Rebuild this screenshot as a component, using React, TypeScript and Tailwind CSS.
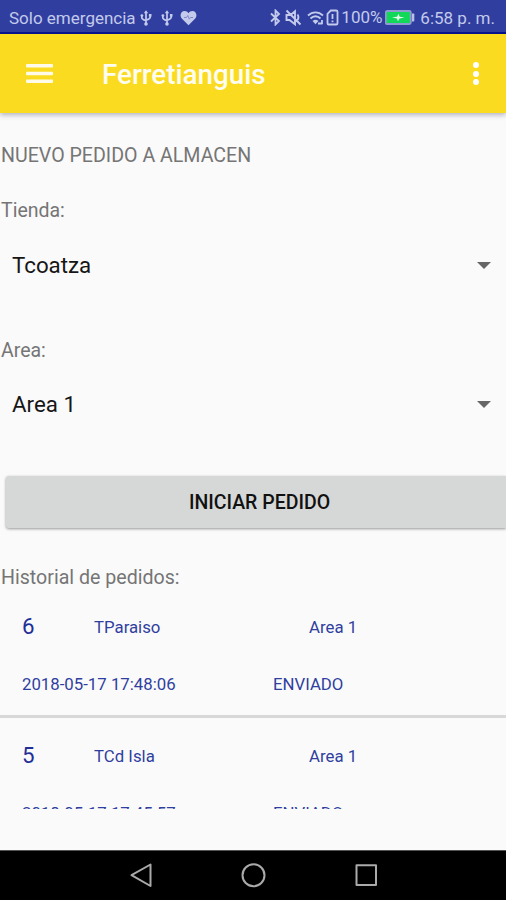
import { useState } from 'react';

const pedidos = [
  { id: 6, tienda: 'TParaiso', area: 'Area 1', fecha: '2018-05-17 17:48:06', estado: 'ENVIADO' },
  { id: 5, tienda: 'TCd Isla', area: 'Area 1', fecha: '2018-05-17 17:45:57', estado: 'ENVIADO' },
];

const UsbIcon = () => (
  <svg width="12" height="18" viewBox="0 0 12 18" fill="none" stroke="currentColor" strokeWidth="1.7">
    <path d="M6 3v12M1.8 6.5v2.2c0 1.5 1 2 4.2 3.1M10.2 6v2.2c0 1.5-1 2-4.2 3.1" />
    <path d="M6 1.2 3.8 4.2h4.4z" fill="currentColor" stroke="none" />
    <circle cx="1.9" cy="6.6" r="1.4" fill="currentColor" stroke="none" />
    <path d="M8.9 5h2.6v2.6H8.9z" fill="currentColor" stroke="none" />
    <circle cx="6" cy="15" r="1.8" fill="currentColor" stroke="none" />
  </svg>
);

const StatusBar = () => (
  <div className="flex h-[34px] shrink-0 items-center border-b-2 border-[#06128f] bg-[#303f9f] pt-[3px] text-[#c3caeb]">
    <span className="w-[131px] pt-0.5 pl-[9px] text-[17px] whitespace-nowrap">Solo emergencia</span>
    <div className="flex items-center pl-[9px]">
      <UsbIcon />
      <div className="w-[9px]" />
      <UsbIcon />
      <svg className="ml-[7px]" width="17" height="16" viewBox="0 0 17 16">
        <path fill="currentColor" d="M8.5 15.2 2 8.8C-.8 5.7.8 1 4.6 1c1.7 0 3 .8 3.9 2.2C9.4 1.8 10.7 1 12.4 1c3.8 0 5.4 4.700 2.600 7.800z" />
        <path d="M4 7.500h2.500l1.300-2 1.500 3.600 1.200-1.600H13" fill="none" stroke="#7f89c6" strokeWidth="1" />
      </svg>
    </div>
    <div className="ml-auto flex items-center pr-[11px]">
      <svg width="11" height="17" viewBox="0 0 11 17" fill="none" stroke="currentColor" strokeWidth="1.800">
        <path d="m1 4.500 8 7.500-3.500 3.500v-14L9 5l-8 7.500" />
      </svg>
      <svg className="ml-1" width="17" height="17" viewBox="0 0 17 17" fill="none" stroke="currentColor" strokeWidth="1.900">
        <path d="M1.500 6v5h3l5.500 4.300V2.200L5.500 6zM1.500 1.500l14 14M12.500 5.500c1 1.500 1 4 0 5.500" />
      </svg>
      <svg className="ml-[5px]" width="18" height="16" viewBox="0 0 18 16" fill="none" stroke="currentColor" strokeWidth="1.800">
        <path d="M1 5.500c4.500-4.300 10.500-4.300 15 0M3.500 8.500c3-3 7-3 10 0" />
        <path d="M5.500 11c2-1.700 4-1.700 6 0l-3 3.200z" fill="currentColor" stroke="none" />
        <path d="M11 13.500h4.500M15 10v4" strokeWidth="1.800" />
      </svg>
      <svg className="ml-px" width="13" height="17" viewBox="0 0 13 17" fill="none" stroke="currentColor" strokeWidth="1.800">
        <path d="M4.800 1.500h5.400c.8 0 1.300.5 1.300 1.300v11.400c0 .8-.5 1.300-1.300 1.300H2.800c-.8 0-1.300-.5-1.300-1.300V4.800z" />
        <path d="M6.500 5v5M6.500 11.500v1.700" />
      </svg>
      <span className="ml-[2px] w-[41px] text-[17px] whitespace-nowrap">100%</span>
      <svg className="mr-px ml-[3px]" width="30" height="16" viewBox="0 0 30 16">
        <rect x=".8" y="1" width="25" height="13" rx="1.500" fill="#12d85a" stroke="#8f9bd0" strokeWidth="1.800" />
        <path d="M27 3.500h1.500c.5 0 .8.300.8.800v6.400c0 .5-.3.800-.8.800H27z" fill="#b8c1e6" />
        <path d="m7 7.200 5-.5 1.500-3 1.200 3 4.800.8-5 1-1.500 2.700-1.200-2.700z" fill="#e5ffec" />
      </svg>
      <span className="ml-1 pt-0.5 text-[17px] whitespace-nowrap">6:58 p. m.</span>
    </div>
  </div>
);

const AppBar = () => (
  <header className="z-10 flex h-[79px] shrink-0 items-center bg-[#fadb20] pr-[18px] pl-[26px] text-white shadow-[0_2px_5px_rgba(40,40,90,0.35)]">
    <button aria-label="Menu" className="w-[27px]">
      <svg width="27" height="19" viewBox="0 0 27 19" fill="#fffbe8">
        <rect y="0" width="27" height="3.500" rx=".8" />
        <rect y="7.700" width="27" height="3.500" rx=".8" />
        <rect y="15.400" width="27" height="3.500" rx=".8" />
      </svg>
    </button>
    <h1 className="mt-0.5 ml-[49px] text-[27.800px] font-medium text-[#fffdf0]">Ferretianguis</h1>
    <button aria-label="Opciones" className="ml-auto flex w-6 flex-col items-center gap-[2.500px]">
      <span className="size-1.5 rounded-full bg-white" />
      <span className="size-1.5 rounded-full bg-white" />
      <span className="size-1.5 rounded-full bg-white" />
    </button>
  </header>
);

const Spinner = ({ label, value }: { label: string; value: string }) => (
  <div className="h-[139.500px]">
    <p className="pl-px text-[19.500px] leading-[23px] text-[#757575]">{label}</p>
    <button className="mt-5 flex h-[46px] w-full items-center justify-between pr-[15px] pl-3">
      <span className="pt-px text-[22.300px] text-[#161616]">{value}</span>
      <svg width="14" height="7" viewBox="0 0 14 7">
        <path d="M0 0h14L7 7z" fill="#666" />
      </svg>
    </button>
  </div>
);

const NavigationBar = () => (
  <nav className="h-[50px] shrink-0 border-t border-[#555] bg-black">
    <svg width="506" height="49" viewBox="0 0 506 49" fill="none" stroke="#aaa" strokeWidth="2" strokeLinejoin="round">
      <path d="M150.500 13.500v21.500L131.500 24.200z" />
      <circle cx="253.500" cy="24.200" r="11" />
      <rect x="356.500" y="14.300" width="19.500" height="19.800" />
    </svg>
  </nav>
);

export default function App() {
  const [tienda] = useState('Tcoatza');
  const [area] = useState('Area 1');

  return (
    <div className="flex h-[900px] w-[506px] flex-col overflow-hidden bg-[#fafafa] font-[Roboto,sans-serif]">
      <StatusBar />
      <AppBar />

      <main className="flex min-h-0 flex-1 flex-col pt-[31px]">
        <h2 className="mb-8 pl-px text-[19.600px] leading-[23px] text-[#757575]">NUEVO PEDIDO A ALMACEN</h2>
        <Spinner label="Tienda:" value={tienda} />
        <Spinner label="Area:" value={area} />

        <button className="-mt-[2px] ml-1.5 h-[52px] shrink-0 rounded-l-[3px] bg-[#d6d8d7] pt-0.5 pl-[7px] text-[19.500px] font-medium text-[#111] shadow-[0_1px_3px_rgba(0,0,0,0.4)]">
          INICIAR PEDIDO
        </button>

        <p className="mt-[38px] pl-px text-[19.600px] leading-[23px] text-[#757575]">Historial de pedidos:</p>

        {/* Order history, cut off where the list area ends */}
        <ul className="h-[220px] shrink-0 overflow-hidden text-[16.800px] leading-5 text-[#303f9f]">
          {pedidos.map((pedido) => (
            <li key={pedido.id} className="h-[128.500px] border-b-3 border-[#d8d8d8] pt-7 pl-[22px]">
              <div className="flex h-5 items-center">
                <span className="-mt-0.5 w-[72px] text-[22.300px] text-[#1f2f96]">{pedido.id}</span>
                <span className="w-[215px]">{pedido.tienda}</span>
                <span>{pedido.area}</span>
              </div>
              <div className="mt-[37px] flex">
                <span className="w-[251px]">{pedido.fecha}</span>
                <span>{pedido.estado}</span>
              </div>
            </li>
          ))}
        </ul>
      </main>

      <NavigationBar />
    </div>
  );
}
